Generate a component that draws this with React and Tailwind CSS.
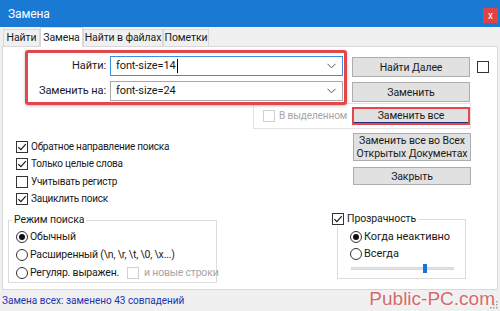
import React from "react";

const CheckBox = ({ checked, disabled }) => (
  <span
    className={`w-[12px] h-[12px] border flex items-center justify-center bg-white shrink-0 ${
      disabled ? "border-[#d0d0d0]" : "border-[#333333]"
    }`}
  >
    {checked && (
      <svg width="10" height="10" viewBox="0 0 10 10">
        <path d="M1.3 5.1 L3.9 7.7 L8.8 2.1" fill="none" stroke="#1a1a1a" strokeWidth="1.2" />
      </svg>
    )}
  </span>
);

const Radio = ({ checked }) => (
  <span className="w-[12px] h-[12px] rounded-full border border-[#333333] bg-white flex items-center justify-center shrink-0">
    {checked && <span className="w-[6px] h-[6px] rounded-full bg-[#111111]" />}
  </span>
);

const Btn = ({ children, className = "" }) => (
  <div
    className={`w-[118px] bg-[#e1e1e1] border border-[#adadad] flex items-center justify-center text-center leading-[13px] whitespace-nowrap ${className}`}
  >
    {children}
  </div>
);

const Chevron = () => (
  <svg width="9" height="6" viewBox="0 0 9 6" className="shrink-0">
    <path d="M0.5 0.8 L4.5 4.8 L8.5 0.8" fill="none" stroke="#555555" strokeWidth="1" />
  </svg>
);

const Tab = ({ children, width, active }) =>
  active ? (
    <div
      className={`${width} h-[20px] mb-[-1px] relative z-10 bg-white border border-b-0 border-[#d9d9d9] flex items-start justify-center pt-[3px] whitespace-nowrap`}
    >
      {children}
    </div>
  ) : (
    <div
      className={`${width} h-[17px] bg-[#f0f0f0] border border-b-0 border-[#d9d9d9] flex items-center justify-center whitespace-nowrap`}
    >
      {children}
    </div>
  );

const App = () => {
  const options = [
    { label: "Обратное направление поиска", checked: true },
    { label: "Только целые слова", checked: true },
    { label: "Учитывать регистр", checked: false },
    { label: "Зациклить поиск", checked: true },
  ];

  return (
    <div className="w-[500px] h-[311px] bg-[#f0f0f0] flex flex-col relative overflow-hidden font-['Roboto',sans-serif] text-[10.5px] tracking-[-0.1px] leading-[14px] text-[#1a1a1a] whitespace-nowrap">
      {/* Title bar */}
      <div className="h-[27px] shrink-0 bg-[#1979d3] flex items-center justify-between pl-[8px] pr-[2px]">
        <span className="text-white text-[12px]">Замена</span>
        <div className="mt-[4px] w-[15px] h-[15px] bg-[#e04343] text-white text-[10px] leading-[10px] flex items-center justify-center">
          x
        </div>
      </div>

      {/* Tabs */}
      <div className="h-[19px] shrink-0 flex items-end pl-[3px]">
        <Tab width="w-[37px]">Найти</Tab>
        <Tab width="w-[43px]" active>
          Замена
        </Tab>
        <Tab width="w-[80px]">Найти в файлах</Tab>
        <Tab width="w-[46px]">Пометки</Tab>
      </div>

      {/* Tab panel */}
      <div className="mx-[2px] w-[496px] h-[244px] shrink-0 bg-white border border-[#d9d9d9] flex flex-col">
        {/* Find / replace inputs */}
        <div className="flex items-start">
          <div className="ml-[22px] mt-[3px] w-[322px] h-[55px] relative z-10 border-[3px] border-[#e2474b] rounded-[3px] shadow-[0_1px_3px_rgba(0,0,0,0.25)] flex flex-col gap-[5px] pt-[3px]">
            <div className="flex items-center gap-[4px]">
              <span className="w-[78px] text-right text-[11px]">Найти:</span>
              <div className="w-[233px] h-[20px] border border-[#3d8ee0] flex items-center pl-[5px] pr-[6px] text-[11px]">
                <span>font-size=14</span>
                <span className="w-[1px] h-[14px] bg-black ml-[1px]" />
                <span className="flex-1" />
                <Chevron />
              </div>
            </div>
            <div className="flex items-center gap-[4px]">
              <span className="w-[78px] text-right text-[11px]">Заменить на:</span>
              <div className="w-[233px] h-[20px] border border-[#a9a9a9] flex items-center pl-[5px] pr-[6px] text-[11px]">
                <span>font-size=24</span>
                <span className="flex-1" />
                <Chevron />
              </div>
            </div>
          </div>

          <div className="ml-[5px] mt-[10px] flex flex-col gap-[5px]">
            <Btn className="h-[20px]">Найти Далее</Btn>
            <Btn className="h-[20px]">Заменить</Btn>
          </div>

          <div className="ml-[7px] mt-[14px]">
            <CheckBox />
          </div>
        </div>

        {/* In selection group */}
        <div className="ml-[250px] mt-[-2px] w-[218px] h-[26px] border border-[#e3e3e3] flex items-center">
          <div className="ml-[9px] flex items-center gap-[4px] text-[10px] text-[#a5a5a5]">
            <CheckBox disabled />
            <span>В выделенном</span>
          </div>
          <div className="ml-auto w-[118px] h-[18px] border-2 border-[#e2474b] bg-[#e1e1e1] flex items-center justify-center shadow-[inset_0_-1px_0_#2b2b7a]">
            Заменить все
          </div>
        </div>

        {/* Options + buttons */}
        <div className="flex items-start">
          <div className="ml-[13px] mt-[9px] flex flex-col text-[10px] tracking-[-0.25px]">
            {options.map((o) => (
              <div key={o.label} className="h-[17.5px] flex items-center gap-[3px]">
                <CheckBox checked={o.checked} />
                <span>{o.label}</span>
              </div>
            ))}
          </div>
          <div className="ml-auto mr-[26px] mt-[4px] flex flex-col gap-[6px]">
            <Btn className="h-[28px]">
              Заменить все во Всех
              <br />
              Открытых Документах
            </Btn>
            <Btn className="h-[18px]">Закрыть</Btn>
          </div>
        </div>

        {/* Group boxes */}
        <div className="flex items-start mt-[5px]">
          <fieldset className="ml-[5px] w-[209px] min-w-0 border border-[#dcdcdc] pb-0">
            <legend className="ml-[3px] px-[2px]">Режим поиска</legend>
            <div className="pl-[7px] pt-[1px] flex flex-col text-[10.5px] tracking-[-0.2px]">
              <div className="h-[18px] flex items-center gap-[2px]">
                <Radio checked />
                <span>Обычный</span>
              </div>
              <div className="h-[18px] flex items-center gap-[2px]">
                <Radio />
                <span>Расширенный (\n, \r, \t, \0, \x...)</span>
              </div>
              <div className="h-[18px] flex items-center gap-[2px]">
                <Radio />
                <span>Регуляр. выражен.</span>
                <span className="ml-[6px]">
                  <CheckBox disabled />
                </span>
                <span className="ml-[3px] text-[#a5a5a5]">и новые строки</span>
              </div>
            </div>
          </fieldset>

          <fieldset className="ml-[120px] mt-[-1px] w-[129px] min-w-0 border border-[#dcdcdc] pb-[4px]">
            <legend className="ml-[-6px] flex items-center gap-[3px] pr-[2px] bg-white">
              <CheckBox checked />
              <span>Прозрачность</span>
            </legend>
            <div className="pl-[12px] pt-[2px] flex flex-col text-[11px]">
              <div className="h-[17px] flex items-center gap-[2px]">
                <Radio checked />
                <span>Когда неактивно</span>
              </div>
              <div className="h-[17px] flex items-center gap-[2px]">
                <Radio />
                <span>Всегда</span>
              </div>
              <div className="h-[12px] flex items-center">
                <div className="ml-[1px] w-[103px] h-[3px] bg-[#e6e6e6] border-y border-[#d6d6d6] relative">
                  <span className="absolute left-[72px] top-[-4px] w-[4px] h-[9px] bg-[#1c74d0]" />
                </div>
              </div>
            </div>
          </fieldset>
        </div>
      </div>

      {/* Status bar */}
      <div className="flex-1 flex items-center pl-[2px] text-[10px] tracking-normal text-[#2433b0]">
        Замена всех: заменено 43 совпадений
      </div>

      {/* Size grip */}
      <svg width="8" height="8" viewBox="0 0 8 8" className="absolute right-[2px] bottom-[2px]">
        <rect x="6" y="0" width="1.5" height="1.5" fill="#a0a0a0" />
        <rect x="3" y="3" width="1.5" height="1.5" fill="#a0a0a0" />
        <rect x="6" y="3" width="1.5" height="1.5" fill="#a0a0a0" />
        <rect x="0" y="6" width="1.5" height="1.5" fill="#a0a0a0" />
        <rect x="3" y="6" width="1.5" height="1.5" fill="#a0a0a0" />
        <rect x="6" y="6" width="1.5" height="1.5" fill="#a0a0a0" />
      </svg>

      {/* Watermark */}
      <div className="absolute right-[5px] bottom-[0px] font-['Liberation_Sans',sans-serif] tracking-normal text-[19px] leading-[24px] text-[#d5696d] [text-shadow:0_0_2px_#ffffff]">
        Public-PC.com
      </div>
    </div>
  );
};

export default App;
